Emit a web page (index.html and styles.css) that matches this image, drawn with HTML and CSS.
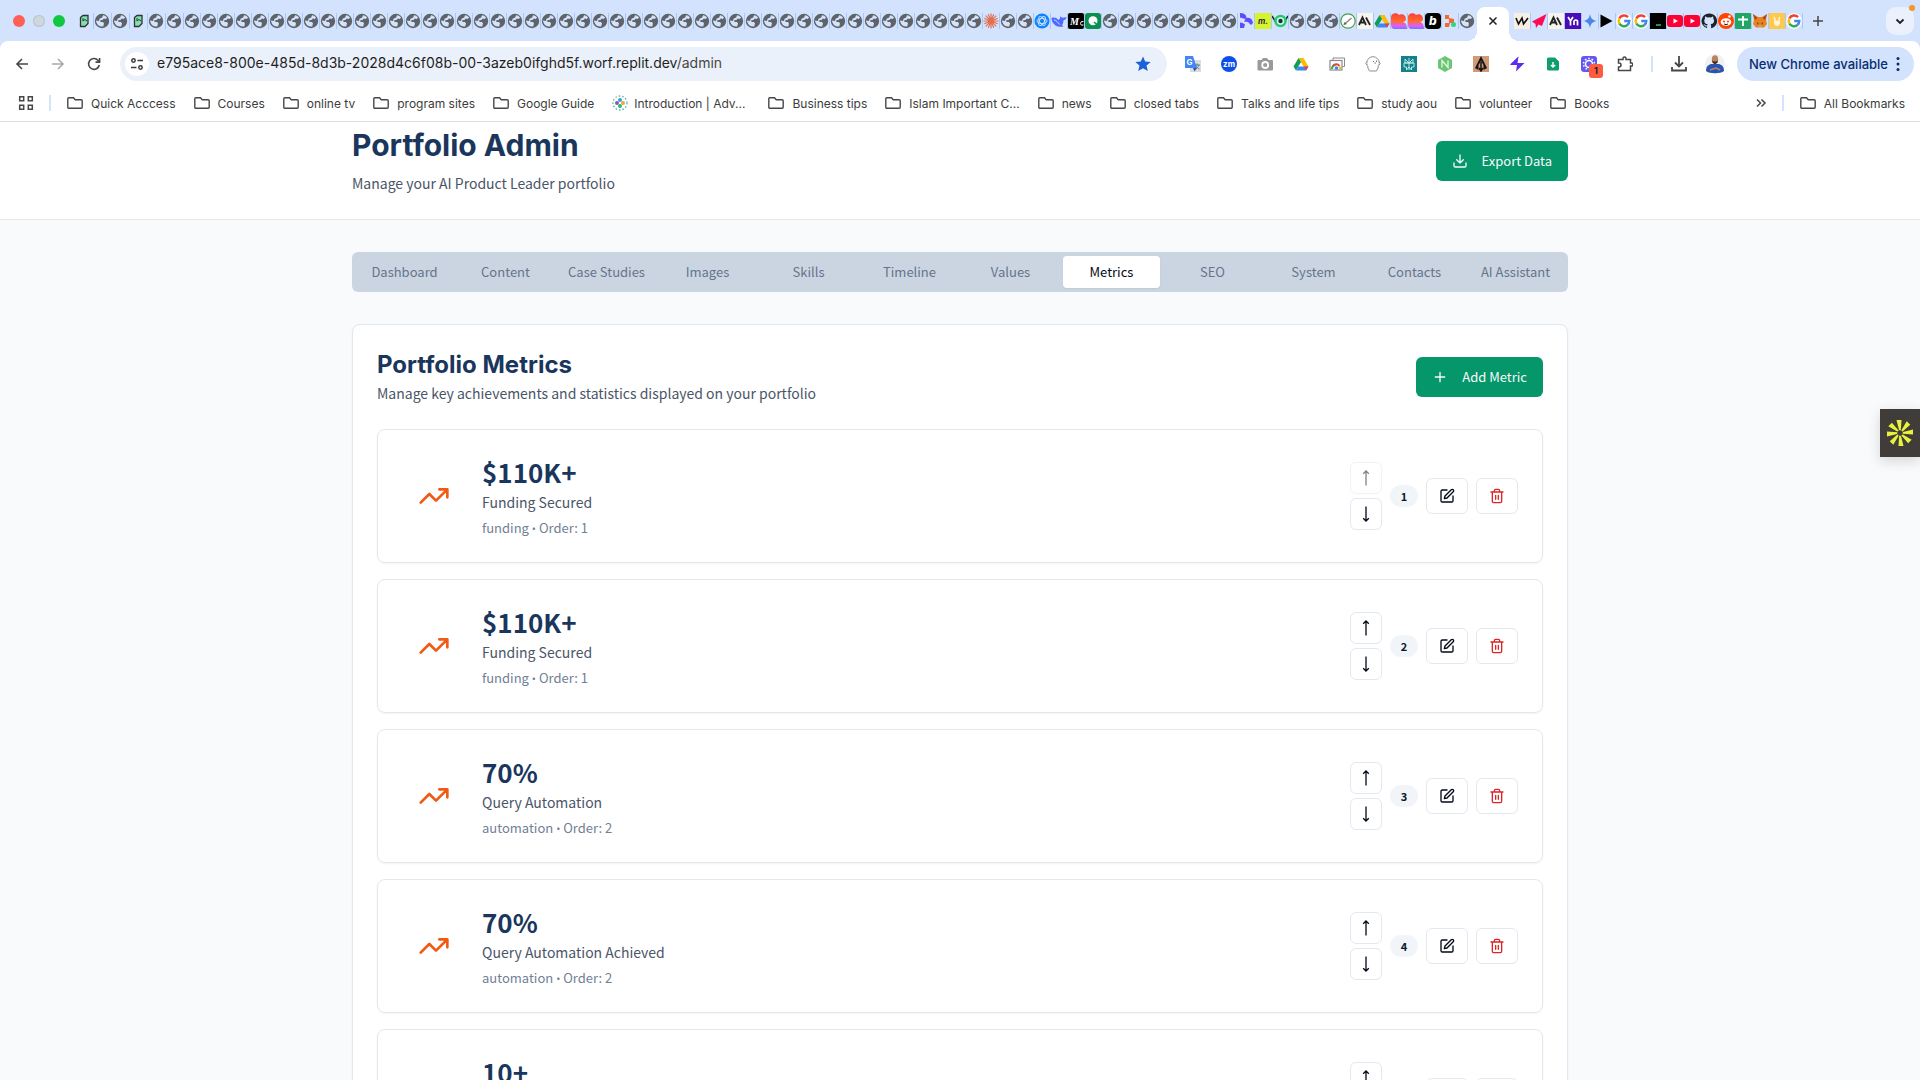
FILE: index.html
```html
<!DOCTYPE html>
<html lang="en">
<head>
<meta charset="utf-8">
<title>Portfolio Admin</title>
<link rel="stylesheet" href="styles.css">
</head>
<body>
<svg class="sprite" aria-hidden="true">
  <symbol id="globe" viewBox="0 0 16 16"><circle cx="8" cy="8" r="7.2" fill="#5f6368"/><path d="M9 2.2c1.800.2 3.200 1.100 4.100 2.500L11.500 6 9.800 5.500 8.500 7 6.200 7.200 6.500 9h2.500l1 1.500-.8 2.900c-3 .6-5.800-1.200-6.700-4L1.800 7.500 5 8l.500-2.200L8.200 4.500z" fill="#d3e2fd" fill-rule="evenodd"/></symbol>
  <symbol id="parrot" viewBox="0 0 16 16"><path d="M4.500 4.500 7 2.500h5v8l-3 3H4.500z" fill="#7fe0b0" stroke="#333" stroke-width="1.300"/><path d="M7 5v3l2-1.500L11 8M4.500 8v5" fill="none" stroke="#333"/></symbol>
  <symbol id="claude" viewBox="0 0 16 16"><path d="M8 .5v15M.5 8h15M2.700 2.700l10.600 10.600M13.300 2.700 2.700 13.300M5.300 1.300l5.400 13.400M1.300 10.700l13.400-5.400M10.700 1.300 5.300 14.700M1.300 5.300l13.400 5.400" stroke="#e0704f" stroke-width="1.200"/></symbol>
  <symbol id="openai" viewBox="0 0 16 16"><circle cx="8" cy="8" r="7.500" fill="#0a84ff"/><g fill="none" stroke="#d3e2fd" stroke-width=".9"><ellipse cx="8" cy="8" rx="5" ry="2.500"/><ellipse cx="8" cy="8" rx="5" ry="2.500" transform="rotate(60 8 8)"/><ellipse cx="8" cy="8" rx="5" ry="2.500" transform="rotate(120 8 8)"/></g></symbol>
  <symbol id="whale" viewBox="0 0 16 16"><path d="M.5 5C3 4 5 4.500 7.500 7L9 5.500 9 3c1 1.500 2.500 2.500 6.500 1-.2 2-1.500 3-3 3.200-.2 3-1 4.300-1.500 5l1.500 1.300C6 15 .5 11 .5 5z" fill="#4d6bfe"/><path d="M3 7c2 0 4 2.500 5.500 4.500" stroke="#d3e2fd" fill="none"/></symbol>
  <symbol id="qgreen" viewBox="0 0 16 16"><rect width="16" height="16" rx="3" fill="#0b8f4d"/><circle cx="8" cy="7.800" r="4.500" fill="#fff"/><path d="m9 9 4 3.500" stroke="#0b8f4d" stroke-width="1.500"/></symbol>
  <symbol id="arcs" viewBox="0 0 16 16"><path d="M2 0q6 0 6.500 4.500L7 6 2 4.500zM8 5q6-1 7 5l-2 2-3-3-4-.5zM2 9.500q3 0 5 2L6 15H2z" fill="#5b4dff"/></symbol>
  <symbol id="eye" viewBox="0 0 16 16"><path d="M0 3l5 8M16 3l-5 8" stroke="#1c2b33" stroke-width="1.500"/><circle cx="8.500" cy="8" r="5" fill="#d9fbe7" stroke="#23c970" stroke-width="2.500"/><circle cx="8.500" cy="8" r="2.200" fill="#12303a"/></symbol>
  <symbol id="pen" viewBox="0 0 16 16"><circle cx="8" cy="8" r="7.200" fill="#fff" stroke="#43a047" stroke-width="1.200"/><path d="M4 11.500 11.500 5" stroke="#8a8a7a" stroke-width="1.500"/><path d="m3.500 12 1-3 2.500 2z" fill="#666"/></symbol>
  <symbol id="anthropic" viewBox="0 0 16 16"><rect width="16" height="16" rx="1" fill="#f5f4ef"/><path d="M2 12 5.500 4.500 9 12M3.500 9.500h4M9 4.500 13 12" fill="none" stroke="#222" stroke-width="1.800"/></symbol>
  <symbol id="drive" viewBox="0 0 16 16"><path d="M5.500 2h5l5 8.500h-5z" fill="#fbbc04"/><path d="M5.500 2 .5 10.500 3 14.500 8 6z" fill="#0f9d58"/><path d="M5.500 10.500H15.500L13 14.500H3z" fill="#4285f4"/><path d="M11 10.500h4.500L13 14.500z" fill="#ea4335"/></symbol>
  <symbol id="flame" viewBox="0 0 16 16"><path d="M0 4C0 0 6-1 8 2c3-2 7 0 7 4 0 2-2 3-3 3 3 1 4 3 4 7H4c-3 0-4-2-4-5z" fill="url(#heat)"/></symbol>
  <linearGradient id="heat" x1="0" y1="0" x2="0" y2="1"><stop offset="0" stop-color="#ff3b3b"/><stop offset=".5" stop-color="#ff6a2b"/><stop offset=".8" stop-color="#e25cff"/><stop offset="1" stop-color="#6a7bff"/></linearGradient>
  <symbol id="dots" viewBox="0 0 16 16"><path d="M3 2h4v3l5 1v4H8L7 14H3v-4h4V6H3z" fill="#f9682b"/><circle cx="11.500" cy="11.500" r="2.500" fill="#32d583"/></symbol>
  <symbol id="wlogo" viewBox="0 0 16 16"><rect width="16" height="16" fill="#f7efe4"/><path d="m2 5 2.500 6L8 5l1.500 6L14 5" fill="none" stroke="#111" stroke-width="1.600"/></symbol>
  <symbol id="rocket" viewBox="0 0 16 16"><path d="M15.500 1 11 13 7.500 11.500 5 15 4.500 11 1 8.500z" fill="#ff0a54"/></symbol>
  <symbol id="yahoo" viewBox="0 0 16 16"><rect width="16" height="16" fill="#4a0db5"/><path d="m3 4 2.500 4L8 4M5.500 8v4.500M9 12V8q2-2 3.500 0v4.500" fill="none" stroke="#fff" stroke-width="1.700"/></symbol>
  <symbol id="gemini" viewBox="0 0 16 16"><path d="M8 1c.8 4.500 2.500 6.200 7 7-4.500.8-6.200 2.500-7 7-.8-4.500-2.500-6.200-7-7 4.500-.8 6.200-2.500 7-7z" fill="#4a86e8"/></symbol>
  <symbol id="play" viewBox="0 0 16 16"><path d="m1.500 1.500 12 6.500-12 6.500z"/></symbol>
  <symbol id="google" viewBox="0 0 16 16"><circle cx="8" cy="8" r="7.800" fill="#fff"/><g fill="none" stroke-width="2.500"><path d="M12 4.200A5.300 5.300 0 0 0 3.400 5.400" stroke="#ea4335"/><path d="M3.400 5.400a5.300 5.300 0 0 0 0 5.200" stroke="#fbbc05"/><path d="M3.400 10.600A5.300 5.300 0 0 0 11.400 12" stroke="#34a853"/><path d="M11.400 12a5.300 5.300 0 0 0 1.900-4H8.200" stroke="#4285f4"/></g></symbol>
  <symbol id="terminal" viewBox="0 0 16 16"><rect width="16" height="16"/><path d="M6 12h5" stroke="#2fbf71" stroke-width="1.500"/></symbol>
  <symbol id="youtube" viewBox="0 0 16 16"><rect y="2" width="16" height="12" rx="3" fill="#ff0033"/><path d="M6.500 5.500v5L11 8z" fill="#fff"/></symbol>
  <symbol id="github" viewBox="0 0 16 16"><path d="M8 .5a7.500 7.500 0 0 0-2.400 14.600c.4.100.5-.2.500-.4v-1.300c-2 .4-2.500-1-2.500-1-.3-.8-.8-1-.8-1-.7-.5 0-.5 0-.5.800.1 1.200.8 1.200.8.700 1.200 1.800.8 2.200.6 0-.5.300-.8.500-1-1.700-.2-3.400-.8-3.400-3.700 0-.8.300-1.500.8-2-.1-.2-.4-1 .1-2 0 0 .6-.2 2.100.8a7 7 0 0 1 3.800 0c1.400-1 2-.8 2-.8.500 1 .2 1.800.1 2 .5.500.8 1.200.8 2 0 2.900-1.700 3.500-3.400 3.700.3.200.5.700.5 1.400v2.100c0 .2.100.5.500.4A7.500 7.500 0 0 0 8 .5z" fill="#1f2328"/></symbol>
  <symbol id="reddit" viewBox="0 0 16 16"><circle cx="8" cy="8" r="8" fill="#ff4500"/><ellipse cx="8" cy="9" rx="5.300" ry="3.800" fill="#fff"/><circle cx="11.500" cy="3.500" r="1.300" fill="#fff"/><circle cx="6" cy="8.500" r="1.100" fill="#ff4500"/><circle cx="10" cy="8.500" r="1.100" fill="#ff4500"/><path d="M6 11q2 1.200 4 0" stroke="#222" fill="none"/></symbol>
  <symbol id="sheets" viewBox="0 0 16 16"><rect width="16" height="16" rx="1" fill="#23a566"/><path d="M8 3v10M3 6.500h10" stroke="#fff" stroke-width="1.800"/></symbol>
  <symbol id="fox" viewBox="0 0 16 16"><path d="M1 1l5 3h4l5-3-1 6 1 4-3 3.500H4L1 11l1-4z" fill="#e8821e"/><path d="M5 9.500 6.500 10 6 12zM11 9.500 9.500 10l.5 2z" fill="#233447"/><path d="M6 12.500h4l-1 2H7z" fill="#c0ad9e"/><path d="M1 1l4.500 4L3 7zM15 1l-4.500 4L13 7z" fill="#a8481b"/></symbol>
  <symbol id="hand" viewBox="0 0 16 16"><rect width="16" height="16" fill="#ffc94d"/><path d="M5 4l1.500 4M10.500 4 10 8" stroke="#fff3d6" stroke-width="1.500"/><path d="M5 7.500h6V11l-2 2H7l-2-2z" fill="#fff3d6"/></symbol>
  <symbol id="folder" viewBox="0 0 16 16"><path d="M.8 3.800V12.200a1 1 0 0 0 1 1H14.200a1 1 0 0 0 1-1V5.800a1 1 0 0 0-1-1H8.200L6.500 2.800H1.800a1 1 0 0 0-1 1z" fill="none" stroke="#474747" stroke-width="1.400"/></symbol>
  <symbol id="up" viewBox="0 0 16 16"><path d="M8 15.500V1M5.200 3.800 8 1l2.800 2.800" fill="none" stroke="#020817" stroke-width="1.300"/></symbol>
  <symbol id="trend" viewBox="0 0 24 24"><path d="M22 7l-8.500 8.500-5-5L2 17M16 7h6v6" fill="none" stroke="#f05a14" stroke-width="2" stroke-linecap="round" stroke-linejoin="round"/></symbol>
  <symbol id="edit" viewBox="0 0 24 24"><path d="M12 3H5a2 2 0 0 0-2 2v14a2 2 0 0 0 2 2h14a2 2 0 0 0 2-2v-7M18.375 2.625a2.121 2.121 0 1 1 3 3L12 15l-4 1 1-4Z" fill="none" stroke="#020817" stroke-width="2" stroke-linecap="round" stroke-linejoin="round"/></symbol>
  <symbol id="trash" viewBox="0 0 24 24"><path d="M3 6h18M19 6v14c0 1-1 2-2 2H7c-1 0-2-1-2-2V6M8 6V4c0-1 1-2 2-2h4c1 0 2 1 2 2v2M10 11v6M14 11v6" fill="none" stroke="#dc2626" stroke-width="2" stroke-linecap="round" stroke-linejoin="round"/></symbol>
</svg>

<div class="browser">
  <div class="tabstrip">
    <span class="light red"></span><span class="light grey"></span><span class="light green"></span>
    <div class="tabs">
      <i class="wide"><svg><use href="#parrot"/></svg></i><i class="wide"><svg><use href="#globe"/></svg></i><i class="wide"><svg><use href="#globe"/></svg></i><i class="wide"><svg><use href="#parrot"/></svg></i><i class="wide"><svg><use href="#globe"/></svg></i><i class="wide"><svg><use href="#globe"/></svg></i>
      <i><svg><use href="#globe"/></svg></i><i><svg><use href="#globe"/></svg></i><i><svg><use href="#globe"/></svg></i><i><svg><use href="#globe"/></svg></i><i><svg><use href="#globe"/></svg></i><i><svg><use href="#globe"/></svg></i><i><svg><use href="#globe"/></svg></i><i><svg><use href="#globe"/></svg></i><i><svg><use href="#globe"/></svg></i><i><svg><use href="#globe"/></svg></i>
      <i><svg><use href="#globe"/></svg></i><i><svg><use href="#globe"/></svg></i><i><svg><use href="#globe"/></svg></i><i><svg><use href="#globe"/></svg></i><i><svg><use href="#globe"/></svg></i><i><svg><use href="#globe"/></svg></i><i><svg><use href="#globe"/></svg></i><i><svg><use href="#globe"/></svg></i><i><svg><use href="#globe"/></svg></i><i><svg><use href="#globe"/></svg></i>
      <i><svg><use href="#globe"/></svg></i><i><svg><use href="#globe"/></svg></i><i><svg><use href="#globe"/></svg></i><i><svg><use href="#globe"/></svg></i><i><svg><use href="#globe"/></svg></i><i><svg><use href="#globe"/></svg></i><i><svg><use href="#globe"/></svg></i><i><svg><use href="#globe"/></svg></i><i><svg><use href="#globe"/></svg></i><i><svg><use href="#globe"/></svg></i>
      <i><svg><use href="#globe"/></svg></i><i><svg><use href="#globe"/></svg></i><i><svg><use href="#globe"/></svg></i><i><svg><use href="#globe"/></svg></i><i><svg><use href="#globe"/></svg></i><i><svg><use href="#globe"/></svg></i><i><svg><use href="#globe"/></svg></i><i><svg><use href="#globe"/></svg></i><i><svg><use href="#globe"/></svg></i><i><svg><use href="#globe"/></svg></i>
      <i><svg><use href="#globe"/></svg></i><i><svg><use href="#globe"/></svg></i><i><svg><use href="#globe"/></svg></i><i><svg><use href="#globe"/></svg></i><i><svg><use href="#globe"/></svg></i><i><svg><use href="#globe"/></svg></i><i><svg><use href="#globe"/></svg></i>
      <i><svg><use href="#claude"/></svg></i><i><svg><use href="#globe"/></svg></i><i><svg><use href="#globe"/></svg></i><i><svg><use href="#openai"/></svg></i><i><svg><use href="#whale"/></svg></i><i><svg viewBox="0 0 16 16"><rect width="16" height="16" rx="2"/><text x="2" y="12" font-size="10" font-weight="700" font-family="Liberation Serif, serif" fill="#fff">M</text><path d="M15.500 8.500q-3-.5-3 2t3 1.500" fill="none" stroke="#fff"/></svg></i><i><svg><use href="#qgreen"/></svg></i>
      <i><svg><use href="#globe"/></svg></i><i><svg><use href="#globe"/></svg></i><i><svg><use href="#globe"/></svg></i><i><svg><use href="#globe"/></svg></i><i><svg><use href="#globe"/></svg></i><i><svg><use href="#globe"/></svg></i><i><svg><use href="#globe"/></svg></i><i><svg><use href="#globe"/></svg></i>
      <i><svg><use href="#arcs"/></svg></i><i><svg viewBox="0 0 16 16"><rect width="16" height="16" fill="#d9f22e"/><text x="3" y="11" font-size="8" font-weight="700" font-family="Inter, sans-serif" fill="#234">m.</text></svg></i><i><svg><use href="#eye"/></svg></i><i><svg><use href="#globe"/></svg></i><i><svg><use href="#globe"/></svg></i><i><svg><use href="#globe"/></svg></i><i><svg><use href="#pen"/></svg></i><i><svg><use href="#anthropic"/></svg></i><i><svg><use href="#drive"/></svg></i><i><svg><use href="#flame"/></svg></i><i><svg><use href="#flame"/></svg></i><i><svg viewBox="0 0 16 16"><rect width="16" height="16" rx="4"/><text x="4" y="12" font-size="12" font-style="italic" font-weight="800" font-family="Inter, sans-serif" fill="#fff">b</text></svg></i><i><svg><use href="#dots"/></svg></i><i class="last"><svg><use href="#globe"/></svg></i>
      <button class="active-tab" aria-label="Close tab"><svg viewBox="0 0 10 10"><path d="m1.500 1.500 7 7m0-7-7 7" stroke="#1f1f1f" stroke-width="1.500"/></svg></button>
      <i><svg><use href="#wlogo"/></svg></i><i><svg><use href="#rocket"/></svg></i><i><svg><use href="#anthropic"/></svg></i><i><svg><use href="#yahoo"/></svg></i><i><svg><use href="#gemini"/></svg></i><i><svg><use href="#play"/></svg></i><i><svg><use href="#google"/></svg></i><i><svg><use href="#google"/></svg></i><i><svg><use href="#terminal"/></svg></i><i><svg><use href="#youtube"/></svg></i><i><svg><use href="#youtube"/></svg></i><i><svg><use href="#github"/></svg></i><i><svg><use href="#reddit"/></svg></i><i><svg><use href="#sheets"/></svg></i><i><svg><use href="#fox"/></svg></i><i><svg><use href="#hand"/></svg></i><i><svg><use href="#google"/></svg></i>
    </div>
    <button class="new-tab" aria-label="New tab"><svg viewBox="0 0 12 12"><path d="M6 1v10M1 6h10" stroke="#474747" stroke-width="1.500"/></svg></button>
    <button class="tab-search" aria-label="Search tabs"><svg viewBox="0 0 10 10"><path d="M1.500 3.500 5 7l3.500-3.500" fill="none" stroke="#1f1f1f" stroke-width="1.800"/></svg><span class="alert"></span></button>
  </div>

  <div class="toolbar">
    <button class="nav" aria-label="Back"><svg viewBox="0 0 16 16"><path d="M14 8H3m5-5L3 8l5 5" fill="none" stroke="#474747" stroke-width="1.600"/></svg></button>
    <button class="nav" aria-label="Forward"><svg viewBox="0 0 16 16"><path d="M2 8h11M8 3l5 5-5 5" fill="none" stroke="#a9a9a9" stroke-width="1.600"/></svg></button>
    <button class="nav" aria-label="Reload"><svg viewBox="0 0 16 16"><path d="M13.300 9A5.400 5.400 0 1 1 12 4.300l1.500 1.500M13.600 2v4.100H9.500" fill="none" stroke="#474747" stroke-width="1.600"/></svg></button>
    <div class="omnibox">
      <button class="site-info" aria-label="Site information"><svg viewBox="0 0 16 16"><g fill="none" stroke="#3c3c3c" stroke-width="1.500"><circle cx="4.500" cy="4.500" r="1.700"/><path d="M8.500 4.500H14M2 11.500h5.500"/><circle cx="11.500" cy="11.500" r="1.700"/></g></svg></button>
      <span class="url">e795ace8-800e-485d-8d3b-2028d4c6f08b-00-3azeb0ifghd5f.worf.replit.dev<span class="path">/admin</span></span>
      <svg class="star" viewBox="0 0 16 16"><path d="m8 .5 2.200 5 5.500.5-4.200 3.600 1.300 5.400L8 12.200 3.200 15l1.300-5.400L.3 6l5.500-.5z" fill="#1a62d6"/></svg>
    </div>
    <div class="extensions">
      <svg viewBox="0 0 16 16"><rect x="5" y="4" width="11" height="12" fill="#dadce0"/><path d="M9.500 9H15M12 7.500V9M14 9c-.5 2-2.500 3.500-4 4M11 9.500c.5 1.500 2 3 3.500 3.500" stroke="#5f7d8c" fill="none"/><path d="M0 0h8l4 12H0z" fill="#4285f4"/><path d="M8 12h4l-2.500 3.500z" fill="#3052b4"/><text x="1.500" y="9" font-size="8" font-weight="700" font-family="Inter, sans-serif" fill="#fff">G</text></svg>
      <svg viewBox="0 0 16 16"><circle cx="8" cy="8" r="8" fill="#0b4fe8"/><text x="8" y="10.500" font-size="8" font-weight="700" font-family="Inter, sans-serif" fill="#fff" text-anchor="middle">zm</text></svg>
      <svg viewBox="0 0 16 16"><path d="M1 4h3.500L6 2h4l1.500 2H15a1 1 0 0 1 1 1v8.500a1 1 0 0 1-1 1H1.500a1 1 0 0 1-1-1V5z" fill="#9a9a9a"/><circle cx="8.200" cy="9" r="3" fill="none" stroke="#fff" stroke-width="1.800"/></svg>
      <svg><use href="#drive"/></svg>
      <svg viewBox="0 0 16 16"><path d="M4 4V2h11.500v8.500h-2" fill="none" stroke="#8a8a8a"/><rect x="1" y="4.500" width="12" height="9.500" fill="#fff" stroke="#8a8a8a" stroke-width="1.200"/><path d="M3 13a4 4 0 0 1 3.500-4" stroke="#34a853" stroke-width="2" fill="none"/><path d="M4 10a4 4 0 0 1 6.500 0" stroke="#ea4335" stroke-width="2" fill="none"/><path d="M10.500 10.500a4 4 0 0 1 .5 3" stroke="#fbbc04" stroke-width="2" fill="none"/><circle cx="7.500" cy="12" r="1.800" fill="#4285f4"/></svg>
      <svg viewBox="0 0 16 16"><circle cx="8" cy="7" r="6.300" fill="#fff" stroke="#8b8f9a"/><path d="M2.500 6 .7 7.200l1.500 2M13.500 6l1.800 1.200-1.500 2M2.500 11l2 4h7l2-4" fill="#fff" stroke="#8b8f9a"/><path d="M8.500 5v1M11.500 4.500v1.500M9.500 7h1.500" stroke="#555" stroke-width=".8"/></svg>
      <svg viewBox="0 0 16 16"><rect width="16" height="16" fill="#13808a"/><path d="M8 2v12M4 3l4 4 4-4v4H4zM3 7h10v4h-2.500v3L8 11l-2.500 3v-3H3z" fill="none" stroke="#c9f0f0" stroke-width=".9"/></svg>
      <svg viewBox="0 0 16 16"><path d="m8 0 7 4v8l-7 4-7-4V4z" fill="#6cc573"/><path d="M5 11.500v-7l6 7v-7" fill="none" stroke="#e6f8e7" stroke-width="1.300"/></svg>
      <svg viewBox="0 0 16 16"><rect width="16" height="16" fill="#cf9a78"/><path d="m8 0 6 12-3.500 2V9L8 5 5.500 9v5L2 12z" fill="#151515"/><path d="M8 6v9m-2-3 2 3 2-3" stroke="#151515" stroke-width="1.500" fill="none"/></svg>
      <svg viewBox="0 0 16 16"><path d="M9.500.5 1 8.500h5.500z" fill="#a12bea"/><path d="M9.500.5 8.500 7h7L7 15.500 8 9H1z" fill="#5b2df0"/></svg>
      <svg viewBox="0 0 16 16"><path d="M2 3a1.500 1.500 0 0 1 1.500-1.500H10l4 4V13a1.500 1.500 0 0 1-1.500 1.500h-9A1.500 1.500 0 0 1 2 13z" fill="#0f9d6b"/><path d="M8 6v5M5.800 9 8 11l2.200-2" fill="none" stroke="#fff" stroke-width="1.400"/></svg>
      <span class="badged"><svg viewBox="0 0 16 16"><rect width="16" height="16" rx="3" fill="#6557f5"/><circle cx="8" cy="8" r="3.500" fill="none" stroke="#fff" stroke-width="1.500"/><circle cx="8" cy="8" r="5.500" fill="none" stroke="#fff" stroke-width="1.500" stroke-dasharray="1.500 2"/></svg><b>1</b></span>
      <svg viewBox="0 0 16 16"><path d="M1.500 3.500H6v-1a1.500 1.500 0 0 1 3 0v1h4.500V7h.8a1.500 1.500 0 0 1 0 3h-.8v4.500h-12V11H2a2 2 0 0 0 0-4h-.5z" fill="none" stroke="#474747" stroke-width="1.500"/></svg>
    </div>
    <span class="divider"></span>
    <svg class="download" viewBox="0 0 16 16"><path d="M8 0v10M4 6.500l4 4 4-4M1 11v3.500h14V11" fill="none" stroke="#474747" stroke-width="1.800"/></svg>
    <svg class="avatar" viewBox="0 0 20 20"><circle cx="10" cy="10" r="10" fill="#f1f1f3"/><path d="M1 17c0-5 3-7 6-7h6c3 0 6 2 6 7-3 3-15 3-18 0z" fill="#2b55b5"/><path d="M5 16l6-2 4 2" stroke="#b98262" stroke-width="1.500" fill="none"/><ellipse cx="10" cy="5.500" rx="3.200" ry="4.300" fill="#b98262"/><path d="M7 6.500c.5 4.500 5.500 4.500 6 0l-1.500 1h-3z" fill="#3a2a22"/></svg>
    <button class="update">New Chrome available<svg viewBox="0 0 4 16"><g fill="#062e6f"><circle cx="2" cy="2.500" r="1.500"/><circle cx="2" cy="8" r="1.500"/><circle cx="2" cy="13.500" r="1.500"/></g></svg></button>
  </div>

  <nav class="bookmarks" aria-label="Bookmarks">
    <svg class="apps" viewBox="0 0 16 16"><path d="M1.700 1.700h4v4h-4zM10.300 1.700h4v4h-4zM1.700 10.300h4v4h-4zM10.300 10.300h4v4h-4z" fill="none" stroke="#474747" stroke-width="1.500"/></svg>
    <span class="divider"></span>
    <a href="#"><svg><use href="#folder"/></svg>Quick Acccess</a>
    <a href="#"><svg><use href="#folder"/></svg>Courses</a>
    <a href="#"><svg><use href="#folder"/></svg>online tv</a>
    <a href="#"><svg><use href="#folder"/></svg>program sites</a>
    <a href="#"><svg><use href="#folder"/></svg>Google Guide</a>
    <a href="#" class="site"><svg viewBox="0 0 16 16"><circle cx="8" cy="8" r="7" fill="none" stroke="#4fb3a5" stroke-width="1.300" stroke-dasharray="1.500 2"/><circle cx="8" cy="5" r="2" fill="#3b9ed8"/><circle cx="5" cy="8" r="2" fill="#8b5aa8"/><circle cx="11" cy="8" r="2" fill="#f0a63a"/><circle cx="8" cy="11" r="2" fill="#35b07a"/></svg>Introduction | Adv...</a>
    <a href="#"><svg><use href="#folder"/></svg>Business tips</a>
    <a href="#"><svg><use href="#folder"/></svg>Islam Important C...</a>
    <a href="#"><svg><use href="#folder"/></svg>news</a>
    <a href="#"><svg><use href="#folder"/></svg>closed tabs</a>
    <a href="#"><svg><use href="#folder"/></svg>Talks and life tips</a>
    <a href="#"><svg><use href="#folder"/></svg>study aou</a>
    <a href="#"><svg><use href="#folder"/></svg>volunteer</a>
    <a href="#"><svg><use href="#folder"/></svg>Books</a>
    <svg class="more" viewBox="0 0 12 12"><path d="M2 2.500 5.500 6 2 9.500M6.500 2.500 10 6 6.500 9.500" fill="none" stroke="#474747" stroke-width="1.500"/></svg>
    <span class="divider"></span>
    <a href="#" class="all"><svg><use href="#folder"/></svg>All Bookmarks</a>
  </nav>
</div>

<div class="page">
  <header class="page-head">
    <div class="wrap row">
      <div>
        <h1>Portfolio Admin</h1>
        <p class="lead">Manage your AI Product Leader portfolio</p>
      </div>
      <button class="primary"><svg viewBox="0 0 24 24"><path d="M21 15v4a2 2 0 0 1-2 2H5a2 2 0 0 1-2-2v-4M7 10l5 5 5-5M12 15V3"/></svg>Export Data</button>
    </div>
  </header>

  <main class="wrap">
    <div class="tablist" role="tablist">
      <button role="tab">Dashboard</button><button role="tab">Content</button><button role="tab">Case Studies</button><button role="tab">Images</button><button role="tab">Skills</button><button role="tab">Timeline</button><button role="tab">Values</button><button role="tab" aria-selected="true">Metrics</button><button role="tab">SEO</button><button role="tab">System</button><button role="tab">Contacts</button><button role="tab">AI Assistant</button>
    </div>

    <section class="card">
      <div class="row">
        <div>
          <h2>Portfolio Metrics</h2>
          <p class="lead">Manage key achievements and statistics displayed on your portfolio</p>
        </div>
        <button class="primary"><svg viewBox="0 0 24 24"><path d="M5 12h14M12 5v14"/></svg>Add Metric</button>
      </div>

      <article class="metric">
        <svg class="trend"><use href="#trend"/></svg>
        <div class="info"><div class="value">$110K+</div><div class="label">Funding Secured</div><div class="meta">funding <span class="dot">•</span> Order: 1</div></div>
        <div class="order"><button disabled aria-label="Move up"><svg><use href="#up"/></svg></button><button class="down" aria-label="Move down"><svg><use href="#up"/></svg></button></div>
        <span class="badge">1</span>
        <button class="act" aria-label="Edit"><svg><use href="#edit"/></svg></button>
        <button class="act" aria-label="Delete"><svg><use href="#trash"/></svg></button>
      </article>
      <article class="metric">
        <svg class="trend"><use href="#trend"/></svg>
        <div class="info"><div class="value">$110K+</div><div class="label">Funding Secured</div><div class="meta">funding <span class="dot">•</span> Order: 1</div></div>
        <div class="order"><button aria-label="Move up"><svg><use href="#up"/></svg></button><button class="down" aria-label="Move down"><svg><use href="#up"/></svg></button></div>
        <span class="badge">2</span>
        <button class="act" aria-label="Edit"><svg><use href="#edit"/></svg></button>
        <button class="act" aria-label="Delete"><svg><use href="#trash"/></svg></button>
      </article>
      <article class="metric">
        <svg class="trend"><use href="#trend"/></svg>
        <div class="info"><div class="value">70%</div><div class="label">Query Automation</div><div class="meta">automation <span class="dot">•</span> Order: 2</div></div>
        <div class="order"><button aria-label="Move up"><svg><use href="#up"/></svg></button><button class="down" aria-label="Move down"><svg><use href="#up"/></svg></button></div>
        <span class="badge">3</span>
        <button class="act" aria-label="Edit"><svg><use href="#edit"/></svg></button>
        <button class="act" aria-label="Delete"><svg><use href="#trash"/></svg></button>
      </article>
      <article class="metric">
        <svg class="trend"><use href="#trend"/></svg>
        <div class="info"><div class="value">70%</div><div class="label">Query Automation Achieved</div><div class="meta">automation <span class="dot">•</span> Order: 2</div></div>
        <div class="order"><button aria-label="Move up"><svg><use href="#up"/></svg></button><button class="down" aria-label="Move down"><svg><use href="#up"/></svg></button></div>
        <span class="badge">4</span>
        <button class="act" aria-label="Edit"><svg><use href="#edit"/></svg></button>
        <button class="act" aria-label="Delete"><svg><use href="#trash"/></svg></button>
      </article>
      <article class="metric">
        <svg class="trend"><use href="#trend"/></svg>
        <div class="info"><div class="value">10+</div></div>
        <div class="order"><button aria-label="Move up"><svg><use href="#up"/></svg></button><button class="down" aria-label="Move down"><svg><use href="#up"/></svg></button></div>
        <span class="badge">5</span>
        <button class="act" aria-label="Edit"><svg><use href="#edit"/></svg></button>
        <button class="act" aria-label="Delete"><svg><use href="#trash"/></svg></button>
      </article>
    </section>
  </main>
</div>

<button class="widget" aria-label="Open assistant"><svg viewBox="-14 -14 28 28"><g fill="#e8f13c"><path id="ray" d="M-3.500-13H1.500L.8-2.500-1-3z"/><use href="#ray" transform="rotate(45)"/><use href="#ray" transform="rotate(90)"/><use href="#ray" transform="rotate(135)"/><use href="#ray" transform="rotate(180)"/><use href="#ray" transform="rotate(225)"/><use href="#ray" transform="rotate(270)"/><use href="#ray" transform="rotate(315)"/></g></svg></button>
</body>
</html>
```
FILE: styles.css
```css
* { box-sizing: border-box; }
body { margin: 0; height: 100vh; display: flex; flex-direction: column; overflow: hidden; background: #f8fafc; font-family: "Noto Sans CJK SC", "Noto Sans", sans-serif; }
button { border: 0; padding: 0; margin: 0; background: none; font: inherit; color: inherit; display: flex; align-items: center; justify-content: center; }
h1, h2, p { margin: 0; }
svg { flex: none; }
.sprite { position: absolute; width: 0; height: 0; }

/* Browser chrome */
.browser { flex: none; background: #d3e2fd; font-family: Inter, sans-serif; border-bottom: 1px solid #dcdee1; }
.tabstrip { height: 41px; display: flex; align-items: center; padding: 0 6px 0 13px; }
.light { width: 12px; height: 12px; border-radius: 50%; margin-right: 8px; }
.light.red { background: #ff5f57; }
.light.grey { background: #ced6e0; box-shadow: inset 0 0 0 1px #bcc3cd; }
.light.green { background: #0fc840; margin-right: 10px; }
.tabs { display: flex; align-items: center; height: 41px; }
.tabs i { width: 17px; height: 16px; display: flex; align-items: center; justify-content: center; box-shadow: 1px 0 #a8c7fa; }
.tabs i.wide { width: 18px; }
.tabs i.last { box-shadow: none; }
.tabs svg { width: 16px; height: 16px; }
.active-tab { width: 32px; height: 34px; margin: 7px 4px 0 2px; padding-bottom: 7px; background: #fff; border-radius: 8px 8px 0 0; position: relative; }
.active-tab::before, .active-tab::after { content: ""; position: absolute; bottom: 0; width: 10px; height: 10px; }
.active-tab::before { right: 100%; background: radial-gradient(circle at 0 0, transparent 10px, #fff 10px); }
.active-tab::after { left: 100%; background: radial-gradient(circle at 100% 0, transparent 10px, #fff 10px); }
.tabs .active-tab svg { width: 10px; height: 10px; }
.new-tab { width: 32px; height: 28px; }
.new-tab svg { width: 12px; height: 12px; }
.tab-search { width: 28px; height: 28px; margin-left: auto; border-radius: 10px; background: #eaf1fd; position: relative; }
.tab-search svg { width: 10px; height: 10px; }
.alert { position: absolute; top: -2px; right: -1px; width: 6px; height: 6px; border-radius: 50%; background: #f99522; }

.toolbar { height: 46px; display: flex; align-items: center; padding: 0 6px 0 4px; background: #fff; border-radius: 8px 8px 0 0; }
.nav { width: 36px; height: 34px; }
.nav svg { width: 16px; height: 16px; }
.omnibox { flex: 1; margin: 0 18px 0 8px; height: 34px; border-radius: 17px; background: #ebf1fa; display: flex; align-items: center; padding: 0 16px 0 5px; }
.site-info { width: 24px; height: 24px; border-radius: 50%; background: #fff; margin-right: 8px; }
.site-info svg { width: 16px; height: 16px; }
.url { font-size: 14px; line-height: 18px; padding-bottom: 2px; color: #1f1f1f; flex: 1; white-space: nowrap; }
.path { color: #474747; }
.star { width: 16px; height: 16px; }
.extensions { display: flex; gap: 20px; align-items: center; }
.extensions svg { width: 16px; height: 16px; display: block; }
.badged { position: relative; }
.badged b { position: absolute; left: 8px; top: 8px; width: 14px; height: 14px; border-radius: 3px; background: #ff5b3f; font-size: 9px; line-height: 14px; text-align: center; color: #222; }
.divider { width: 2px; height: 16px; background: #d3e2fd; }
.toolbar .divider { margin: 0 18px; }
.download { width: 16px; height: 16px; }
.avatar { width: 20px; height: 20px; margin: 0 12px 0 18px; }
.update { height: 34px; padding: 0 14px 0 12px; gap: 8px; border-radius: 17px; background: #d3e2fd; color: #062e6f; font-size: 13px; font-weight: 500; white-space: nowrap; }
.update svg { width: 4px; height: 16px; }

.bookmarks { height: 34px; display: flex; align-items: center; background: #fff; padding: 0 15px 2px 18px; font-size: 12px; }
.bookmarks a { display: flex; align-items: center; gap: 8px; color: #3c3c3c; text-decoration: none; white-space: nowrap; margin-right: 18px; }
.bookmarks a svg { width: 16px; height: 16px; }
.bookmarks .site { gap: 6px; margin-right: 23px; }
.bookmarks .all { margin-right: 0; }
.bookmarks .divider { margin: 0 16px 0 15px; }
.apps { width: 16px; height: 16px; }
.more { width: 12px; height: 12px; margin-left: auto; }

/* Admin page */
.page { flex: 1; min-height: 0; overflow: hidden; }
.wrap { max-width: 1280px; margin: 0 auto; padding: 0 32px; }
.row { display: flex; align-items: center; justify-content: space-between; }
.page-head { background: #fff; border-bottom: 1px solid #e5e7eb; padding: 5px 0 24px; }
h1, h2 { font-family: Inter, sans-serif; font-weight: 700; color: #1a365d; }
h1 { font-size: 30px; line-height: 36px; margin-bottom: 8px; }
h2 { font-size: 24px; line-height: 32px; }
.lead { font-size: 14px; line-height: 24px; color: #4a5568; }
.primary { height: 40px; padding: 0 16px; border-radius: 6px; background: #059669; color: #f8fafc; font-size: 13px; line-height: 20px; gap: 14px; }
.primary svg { width: 16px; height: 16px; fill: none; stroke: #f8fafc; stroke-width: 2; stroke-linecap: round; stroke-linejoin: round; }
.tablist { margin: 32px 0; padding: 4px; display: grid; grid-template-columns: repeat(12, 1fr); gap: 4px; background: #cbd5e1; border-radius: 6px; }
.tablist button { height: 32px; border-radius: 4px; font-size: 13px; line-height: 20px; color: #64748b; white-space: nowrap; }
.tablist [aria-selected] { background: #fff; color: #020817; box-shadow: 0 1px 2px rgba(0, 0, 0, .05); }
.card { background: #fff; border: 1px solid #e2e8f0; border-radius: 8px; padding: 24px; box-shadow: 0 1px 2px rgba(0, 0, 0, .05); }
.card > .row { margin-bottom: 24px; }
.metric { display: flex; align-items: center; gap: 8px; padding: 24px; margin-bottom: 16px; border: 1px solid #e2e8f0; border-radius: 8px; box-shadow: 0 1px 2px rgba(0, 0, 0, .05); }
.trend { width: 32px; height: 32px; margin: 0 24px 0 16px; }
.info { flex: 1; min-height: 84px; }
.value { font-size: 26px; line-height: 36px; font-weight: 700; color: #1a365d; }
.label { font-size: 14px; line-height: 24px; margin-bottom: 4px; color: #4a5568; }
.meta { font-size: 13px; line-height: 20px; color: #718096; }
.dot { font-family: "Open Sans", sans-serif; font-size: 11px; line-height: 1; }
.order { display: grid; gap: 4px; }
.order button { width: 32px; height: 32px; border: 1px solid #e2e8f0; border-radius: 6px; }
.order svg { width: 16px; height: 16px; }
.order .down svg { transform: rotate(180deg); }
.order button:disabled { opacity: .5; }
.badge { width: 28px; height: 22px; border-radius: 11px; background: #f1f5f9; font-size: 11px; line-height: 22px; font-weight: 700; text-align: center; color: #0f172a; }
.act { width: 42px; height: 36px; border: 1px solid #e2e8f0; border-radius: 6px; }
.act svg { width: 16px; height: 16px; }
.widget { position: fixed; right: 0; top: 409px; width: 40px; height: 48px; background: #403c39; box-shadow: 0 4px 12px rgba(0, 0, 0, .15); }
.widget svg { width: 28px; height: 28px; }
```
